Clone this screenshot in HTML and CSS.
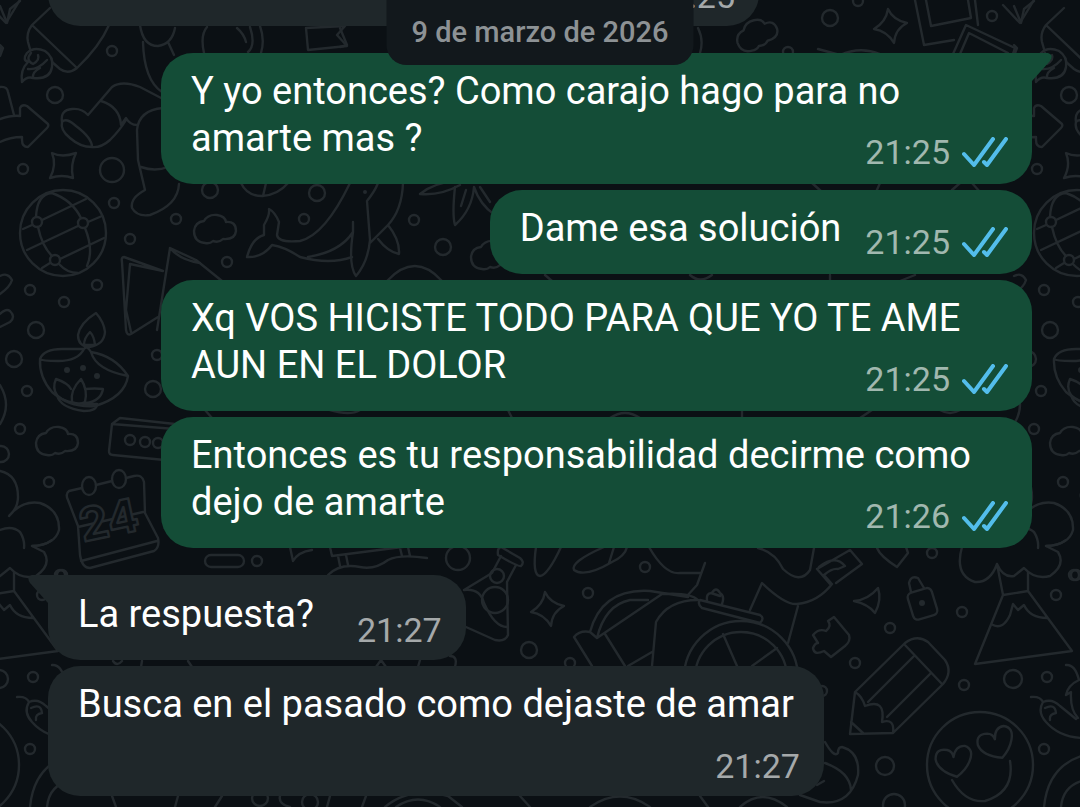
FILE: index.html
```html
<!DOCTYPE html>
<html lang="es">
<head>
    <meta charset="UTF-8">
    <meta name="viewport" content="width=device-width, initial-scale=1.0">
    <title>Chat</title>
    <link rel="stylesheet" href="styles.css">
</head>
<body>
    <svg class="wallpaper" viewBox="0 0 1080 807" preserveAspectRatio="xMinYMin slice" aria-hidden="true">
        <defs>
            <path id="cloud" d="M-10 13 Q-21 12 -21 1 Q-20 -8 -11 -9 Q-7 -16 2 -15 Q10 -14 11 -8 Q21 -9 21 1 Q20 10 8 9 Q4 13 -2 11 Q-5 14 -10 13Z"/>
            <path id="spark" d="M-2 -17 Q3 -6 17 -3 Q5 3 4 17 Q-3 5 -16 3 Q-4 -4 -2 -17Z"/>
            <path id="heart" d="M0 17 Q-18 8 -18 -4 Q-16 -15 -5 -11 Q0 -9 0 -3 Q4 -14 13 -12 Q22 -7 15 4 Q10 12 0 17Z"/>
        </defs>
        <g id="doodles" stroke-width="2.4">
            <!-- rocket -->
            <path d="M50 8 L32 25 Q26 33 28 42 L30 49 M52 62 L60 69 Q68 75 77 68 Q100 46 109 25 M32 25 L77 68"/>
            <path d="M45 51 Q34 46 27 53 Q22 60 28 62 Q20 70 22 82 Q27 76 33 78 Q50 80 52 67 Q54 57 45 51 M31 53 Q25 60 33 64 Q40 60 38 55 M28 69 Q38 70 47 60 M33 78 Q32 72 40 68"/>
            <path d="M0 6 L7 23 L10 9 L20 1 M0 45 L3 48 L0 56"/>
            <!-- arrow -->
            <path d="M0 87 Q7 86 8 92 L14 115 M0 119 Q12 115 20 116 V108 Q22 104 27 106 L48 124 Q49 126 47 128 L28 147 Q22 147 22 140 V137 Q10 137 0 142"/>
            <!-- sock and boot -->
            <path d="M62 122 Q60 110 72 109 Q82 108 88 115 L112 87 Q122 80 140 87 L163 99 M101 101 Q120 107 121 125 L126 118 Q130 125 137 125 M62 122 Q66 117 76 126 Q92 138 92 147 Q80 147 70 138 Q60 130 62 122Z M92 147 Q101 148 110 140 Q120 130 126 120"/>
            <path d="M163 108 Q139 110 137 130 L138 160 L145 190 Q130 198 132 208 Q137 217 150 215 Q178 205 179 184 M141 167 Q155 172 168 167"/>
            <path d="M140 25 Q143 46 158 46 Q172 44 175 28 M143 42 Q144 80 162 92 M168 42 L174 55"/>
            <path d="M204 53 Q200 35 207 27 M250 27 Q256 45 248 52 M260 26 Q265 40 261 53 M237 28 Q244 34 246 42 M306 28 L308 50 L347 46 L337 35 L345 26Z"/>
            <path d="M52 153 Q62 158 76 153 Q70 165 73 178 Q62 174 50 178 Q57 165 52 153Z"/>
            <!-- globe -->
            <circle cx="63" cy="233" r="43"/>
            <circle cx="37" cy="222" r="5"/><circle cx="83" cy="223" r="5"/><circle cx="55" cy="260" r="5"/>
            <path d="M23 229 L32 225 M42 220 L86 199 M27 250 L78 226 M88 222 L102 216 M42 268 L50 263 M60 259 L104 238 M36 217 Q37 194 52 193 Q72 200 81 218 M85 228 Q94 250 87 266 M38 227 Q42 246 52 256 M59 264 Q67 273 78 273"/>
            <path d="M0 276 Q8 272 12 280 Q10 287 0 294 M0 314 Q6 308 10 311 Q16 317 10 322 L0 327"/>
            <!-- map -->
            <path d="M163 271 L124 257 Q121 257 122 262 L126 330 Q127 336 131 334 L158 317 M163 271 L130 264 L126 310 L131 332 M157 330 L170 248 L196 260 L222 281 M170 248 Q180 260 200 263"/>
            <!-- oil lamp -->
            <path d="M40 359 Q44 349 62 349 H84 Q78 361 58 361 Q42 361 40 359 Q39 377 52 392 Q70 408 95 406 Q125 397 128 376 Q115 356 91 352 Q96 370 128 376 M84 349 Q87 345 91 352 M96 313 Q80 323 78 335 Q78 346 89 347 Q104 345 105 332 Q104 322 96 313Z M90 332 Q84 338 84 345 H95 Q94 336 90 332Z"/>
            <path d="M57 395 Q52 388 56 379 Q68 383 71 389 M81 379 Q70 390 72 402 Q80 405 85 402 Q88 390 81 379Z M85 389 Q95 388 103 389 Q101 401 86 403 M57 395 Q64 403 86 404 L97 404 Q97 411 84 411 Q60 408 57 395Z"/>
            <!-- box -->
            <path d="M112 424 L120 418 L175 424 M112 424 L175 429 M112 424 L109 451 Q109 455 113 455 L175 461"/>
            <!-- tree -->
            <path d="M0 471 Q18 475 18 497 Q18 508 9 516 Q22 500 40 503 Q60 510 59 530 Q55 545 32 546 M0 530 Q12 525 20 532 Q25 540 24 548 M0 385 Q12 405 0 424"/>
            <!-- calendar -->
            <path d="M82 488 L69 491 Q65 494 68 500 L78 526 L80 555 Q82 568 90 568 L154 551 Q160 547 158 538 L145 513 L144 482 Q142 474 134 476 L126 478 M96 485 L112 481 M81 561 L157 541 M78 527 L143 512"/>
            <ellipse cx="89" cy="486" rx="7" ry="9"/><ellipse cx="119" cy="479" rx="7" ry="9"/>
            <text class="calendar-day" x="83" y="542" transform="rotate(-12 83 542)">24</text>
            <!-- whale -->
            <path d="M350 183 Q325 235 300 241 Q278 243 277 235 L279 222 Q275 212 269 209 Q270 215 264 225 V235 Q252 238 247 257 Q262 258 272 245 Q285 247 300 257 Q330 265 352 257 M308 257 Q340 252 353 232 V222 M353 232 Q348 265 356 276 Q368 262 370 240 L367 201 Q375 191 378 183 M403 183 Q402 210 388 225 L370 243 M388 225 Q400 240 399 254 Q388 252 378 239"/>
            <path d="M420 194 Q435 182 460 180 M420 194 Q440 196 460 185 M455 187 Q452 215 455 225 Q472 210 474 187 Q480 205 495 215 M466 190 L461 206 M480 187 L490 202 M241 183 Q247 196 262 196 Q278 195 288 183 M266 183 L263 196 M387 281 Q415 251 442 281"/>
            <!-- photos -->
            <path d="M915 0 L924 45 L954 40 M926 0 L931 26 L971 18 L968 0 M975 0 L978 25 M953 54 L966 25 L1015 48 L1013 54 M960 54 L969 33 L1008 53 M1003 5 L1020 23 L1034 0 M818 49 L840 55 Q860 46 880 54"/>
            <path d="M698 28 Q704 40 700 53 M340 28 L347 45 L340 47 M812 183 L822 192 M880 183 L876 192 M952 190 L960 183 M972 183 L980 192"/>
            <!-- between bubbles -->
            <path d="M205 410 L212 418 M330 410 Q350 416 360 410 M508 410 L512 418 M610 418 Q625 408 640 418 M742 410 V418 M860 418 L872 410 M940 410 Q950 416 960 410 M545 275 L552 281 M690 275 Q700 284 712 275 M830 275 V281 M900 281 L915 275"/>
            <!-- lower left -->
            <path d="M338 556 L340 566 M346 555 L348 565 M330 547 L332 556 L410 546 M400 548 L402 556 M408 547 L410 556 M328 575 Q340 563 360 567 Q375 570 388 560 Q400 554 427 558 M290 547 L293 561 Q298 552 312 550"/>
            <rect x="205" y="555" width="39" height="12" rx="6"/>
            <path d="M113 661 Q117 667 122 661 M142 661 L141 667 M188 661 L192 667 M376 667 L381 660 L386 667 M418 667 L420 660 M450 656 Q458 656 455 667"/>
            <path d="M112 796 L116 807 M178 796 L175 807 M222 796 L215 807 M280 796 Q278 804 290 807 M330 796 L327 807 M366 796 L362 807 M385 807 Q410 786 448 796 L462 807 M396 807 Q418 792 440 807 M520 796 L530 807 M590 807 Q620 786 650 807 M700 796 L708 807 M740 807 Q762 787 787 807"/>
            <!-- flask and tubes -->
            <path d="M464 590 L492 573 L501 556 M516 565 L507 582 L508 635 Q505 642 495 640 L466 627 M501 547 L520 558 Q525 562 521 566 Q518 567 498 555 Q497 548 501 547 M464 590 Q480 588 484 603 Q495 628 508 627"/>
            <path d="M536 547 Q532 575 540 576 Q548 575 561 547 M604 547 Q570 562 574 570 Q585 578 612 562 Q625 556 627 547 M614 547 L609 563"/>
            <!-- drum -->
            <path d="M590 632 Q602 588 650 591 L688 597 M597 638 Q605 605 630 600 L648 600 M574 637 Q580 630 590 632 L597 638 L662 594 Q690 592 698 600 M574 637 L592 666 M605 634 L625 666 M652 666 L656 622 Q668 600 698 600 M628 666 L652 652 M649 547 Q665 575 680 573 H700 M705 563 L697 585 L687 596"/>
            <path d="M700 600 L760 615 Q765 618 760 623 L702 608 Q697 604 700 600Z M707 600 Q706 593 712 593 Q716 586 720 593 Q725 596 722 604 M711 593 L720 596 M750 610 L762 583 Q785 605 797 604 Q818 602 832 584 M798 606 L788 643"/>
            <circle cx="741" cy="678" r="57"/><circle cx="741" cy="678" r="46"/>
            <path d="M723 634 L737 666 M777 648 L752 666"/>
            <!-- hand -->
            <path d="M758 548 Q775 552 783 569 Q800 585 810 570 L814 548 M817 569 L830 584 M817 569 L850 550 L862 564 L836 583 M819 567 Q835 554 845 566 L838 569 Q832 568 824 575 L831 583"/>
            <path d="M877 548 Q880 556 897 567 L908 553 L906 547 M854 601 Q868 600 878 588 Q882 600 875 613 Q868 604 854 601Z"/>
            <!-- padlock -->
            <rect x="910" y="590" width="25" height="28" rx="5" transform="rotate(-17 922 604)"/>
            <path d="M911 592 L909 583 Q911 575 918 578 L924 588"/>
            <!-- puzzle piece -->
            <path d="M813 635 Q819 628 826 631 Q832 626 828 621 L834 617 L849 635 Q851 641 845 646 L831 657 L824 651 Q814 656 813 648 Q815 643 818 643Z"/>
            <!-- pencil -->
            <path d="M855 692 L905 643 Q917 634 928 642 L945 660 Q953 672 943 684 L893 733 L850 734Z M904 644 L942 684 M914 656 L868 702 M931 673 L887 717 M855 692 Q862 696 865 706 Q886 698 882 722 Q895 718 893 733 M851 722 L863 733"/>
            <!-- volcano -->
            <path d="M962 547 Q954 575 975 582 Q990 583 997 564 Q1003 578 1014 576 L1024 568 Q1035 580 1050 576 Q1066 565 1058 552 L1046 546 Q1058 546 1066 540 M997 564 L1003 595 L1028 591 V572 M1003 595 L975 664 L1072 651 L1028 591 M993 625 Q1003 630 1010 615 L1013 604 L1018 610 L1024 605 Q1030 618 1047 618"/>
            <!-- smiley -->
            <circle cx="980" cy="765" r="53"/>
            <use href="#heart" transform="translate(954 760) rotate(-10)"/>
            <use href="#heart" transform="translate(996 742) rotate(-22)"/>
            <path d="M952 780 Q965 803 985 801 Q1015 792 1010 761"/>
            <!-- chili -->
            <path d="M1031 697 Q1040 696 1043 702 Q1052 698 1060 706 L1076 719 M1043 702 Q1037 712 1046 722 Q1060 738 1085 738 M1045 708 Q1055 703 1056 713 Q1049 714 1050 720 M1066 665 Q1075 664 1079 680 Q1068 685 1066 695 L1071 692 Q1070 710 1078 718"/>
            <path d="M825 742 Q834 758 838 753 Q838 747 842 747 Q860 752 858 775 Q850 806 820 802 L800 795 M825 763 Q850 772 851 790 M817 785 L824 781"/>
            <path d="M1044 807 Q1048 765 1085 755 M1061 807 Q1063 785 1085 780"/>
            <use href="#cloud" x="57" y="442"/><use href="#cloud" x="215" y="230"/><use href="#cloud" x="492" y="256"/>
            <use href="#cloud" transform="translate(757 35) rotate(-20)"/>
            <use href="#spark" x="890" y="26"/><use href="#spark" x="547" y="609"/>
            <circle cx="112" cy="51" r="5"/><circle cx="55" cy="95" r="8"/><circle cx="23" cy="169" r="5"/><circle cx="112" cy="170" r="12"/>
            <circle cx="114" cy="203" r="5"/><circle cx="130" cy="239" r="5"/><circle cx="97" cy="285" r="5"/><circle cx="64" cy="302" r="5"/>
            <circle cx="30" cy="290" r="5"/><circle cx="36" cy="330" r="8"/><circle cx="14" cy="359" r="8"/><circle cx="157" cy="355" r="5"/>
            <circle cx="27" cy="391" r="5"/><circle cx="20" cy="429" r="5"/><circle cx="1" cy="454" r="8"/><circle cx="49" cy="482" r="5"/>
            <circle cx="153" cy="389" r="8"/><circle cx="130" cy="440" r="5"/><circle cx="145" cy="442" r="5"/><circle cx="158" cy="443" r="5"/>
            <circle cx="210" cy="190" r="8"/><circle cx="176" cy="219" r="5"/><circle cx="227" cy="262" r="5"/><circle cx="317" cy="193" r="8"/>
            <circle cx="304" cy="219" r="5"/><circle cx="414" cy="220" r="5"/><circle cx="443" cy="247" r="8"/><circle cx="257" cy="561" r="5"/>
            <circle cx="62" cy="575" r="5"/><circle cx="458" cy="558" r="12"/><circle cx="497" cy="576" r="7"/><circle cx="495" cy="600" r="13"/>
            <circle cx="588" cy="593" r="5"/><circle cx="645" cy="567" r="5"/><circle cx="529" cy="650" r="8"/><circle cx="570" cy="663" r="5"/>
            <circle cx="830" cy="18" r="8"/><circle cx="858" cy="1" r="5"/><circle cx="788" cy="52" r="5"/><circle cx="992" cy="16" r="5"/>
            <circle cx="932" cy="553" r="5"/><circle cx="962" cy="612" r="5"/><circle cx="890" cy="628" r="5"/><circle cx="855" cy="663" r="5"/>
            <circle cx="822" cy="691" r="5"/><circle cx="964" cy="685" r="5"/><circle cx="1013" cy="679" r="9"/><circle cx="1047" cy="677" r="5"/>
            <circle cx="1056" cy="595" r="5"/><circle cx="1074" cy="575" r="5"/><circle cx="885" cy="766" r="9"/><circle cx="1044" cy="749" r="5"/>
            <circle cx="894" cy="805" r="11"/><circle cx="310" cy="802" r="8"/><circle cx="260" cy="798" r="8"/>
            <g class="dots">
                <circle cx="67" cy="370" r="3"/><circle cx="83" cy="368" r="3"/><circle cx="97" cy="376" r="3"/>
                <circle cx="365" cy="192" r="2"/><circle cx="922" cy="603" r="3"/>
            </g>
        </g>
        <!-- the drawing repeats sideways -->
        <use href="#doodles" x="-1014"/>
        <use href="#doodles" x="1014"/>
    </svg>

    <div class="date">9 de marzo de 2026</div>

    <main class="chat">
        <div class="bubble in previous">
            <div class="meta"><time>21:25</time></div>
        </div>

        <div class="bubble out first">
            <svg class="tail" viewBox="0 0 21 28" aria-hidden="true"><path d="M0 0 H16 Q22 2 18 8 L0 28Z"/></svg>
            <p>Y yo entonces? Como carajo hago para no amarte mas ?</p>
            <div class="meta">
                <time>21:25</time>
                <svg class="ticks" viewBox="0 0 46 30" role="img" aria-label="Leído"><path d="M2 17 L12 28 L31 2 M22 25 L25 28 L44 2"/></svg>
            </div>
        </div>
        <div class="bubble out inline">
            <p>Dame esa solución</p>
            <div class="meta">
                <time>21:25</time>
                <svg class="ticks" viewBox="0 0 46 30" role="img" aria-label="Leído"><path d="M2 17 L12 28 L31 2 M22 25 L25 28 L44 2"/></svg>
            </div>
        </div>
        <div class="bubble out">
            <p>Xq VOS HICISTE TODO PARA QUE YO TE AME AUN EN EL DOLOR</p>
            <div class="meta">
                <time>21:25</time>
                <svg class="ticks" viewBox="0 0 46 30" role="img" aria-label="Leído"><path d="M2 17 L12 28 L31 2 M22 25 L25 28 L44 2"/></svg>
            </div>
        </div>
        <div class="bubble out">
            <p>Entonces es tu responsabilidad decirme como dejo de amarte</p>
            <div class="meta">
                <time>21:26</time>
                <svg class="ticks" viewBox="0 0 46 30" role="img" aria-label="Leído"><path d="M2 17 L12 28 L31 2 M22 25 L25 28 L44 2"/></svg>
            </div>
        </div>

        <div class="bubble in first inline">
            <svg class="tail" viewBox="0 0 21 28" aria-hidden="true"><path d="M0 0 H16 Q22 2 18 8 L0 28Z"/></svg>
            <p>La respuesta?</p>
            <div class="meta"><time>21:27</time></div>
        </div>
        <div class="bubble in stacked">
            <p>Busca en el pasado como dejaste de amar</p>
            <div class="meta"><time>21:27</time></div>
        </div>
    </main>
</body>
</html>
```
FILE: styles.css
```css
* {
    box-sizing: border-box;
}
body {
    margin: 0;
    background-color: #0b1014;
    color: #fff;
    font-family: Roboto, "Noto Sans", sans-serif;
    overflow: hidden;
}
.wallpaper {
    position: absolute;
    top: 0;
    left: 0;
    width: 100%;
    height: 100%;
    fill: none;
    stroke: #23292d;
    stroke-linecap: round;
    stroke-linejoin: round;
}
.wallpaper .dots {
    fill: #23292d;
    stroke: none;
}
.calendar-day {
    font-family: Inter, sans-serif;
    font-size: 46px;
    font-weight: bold;
    fill: #0b1014;
}
.date {
    position: absolute;
    top: 0;
    left: 50%;
    transform: translateX(-50%);
    z-index: 2;
    padding: 12px 25px 13px;
    border-radius: 0 0 20px 20px;
    background-color: #12181c;
    color: #8d9295;
    font-size: 29px;
    font-weight: 500;
    line-height: 40px;
    white-space: nowrap;
}
.chat {
    position: relative;
    display: flex;
    flex-direction: column;
    justify-content: flex-end;
    gap: 6px;
    height: 100vh;
    padding: 0 48px 11px;
}
.bubble {
    position: relative;
    flex-shrink: 0;
    display: flow-root;
    max-width: 871px;
    padding: 15px 30px 22px;
    border-radius: 32px;
    font-size: 38px;
    line-height: 47px;
}
.bubble p {
    display: inline;
    margin: 0;
}
.out {
    align-self: flex-end;
    background-color: #144d37;
}
.in {
    align-self: flex-start;
    background-color: #1f272a;
}
.first {
    margin-top: 21px;
}
.out.first {
    border-top-right-radius: 0;
}
.in.first {
    border-top-left-radius: 0;
}
/* the time sits at the end of the last line when there is room */
.meta {
    float: right;
    display: flex;
    align-items: center;
    gap: 12px;
    margin: 17px -6px -10px 24px;
    color: #a1b8af;
    font-size: 34px;
    line-height: 40px;
}
.in .meta {
    margin: 0 -6px -12px 0;
    color: #a5a9aa;
}
.inline {
    display: flex;
    align-items: flex-end;
}
.in.inline {
    gap: 43px;
    padding-top: 16px;
}
.stacked, .previous {
    display: flex;
    flex-direction: column;
    justify-content: space-between;
    align-items: flex-end;
    height: 130px;
}
.previous {
    justify-content: flex-end;
    width: 711px;
}
.ticks {
    width: 46px;
    height: 30px;
    fill: none;
    stroke: #53bdeb;
    stroke-width: 4;
    stroke-linecap: round;
    stroke-linejoin: round;
}
.tail {
    position: absolute;
    top: 0;
    left: 100%;
    width: 21px;
    height: 28px;
    fill: #144d37;
}
.in .tail {
    left: auto;
    right: 100%;
    fill: #1f272a;
    transform: scaleX(-1);
}
```
